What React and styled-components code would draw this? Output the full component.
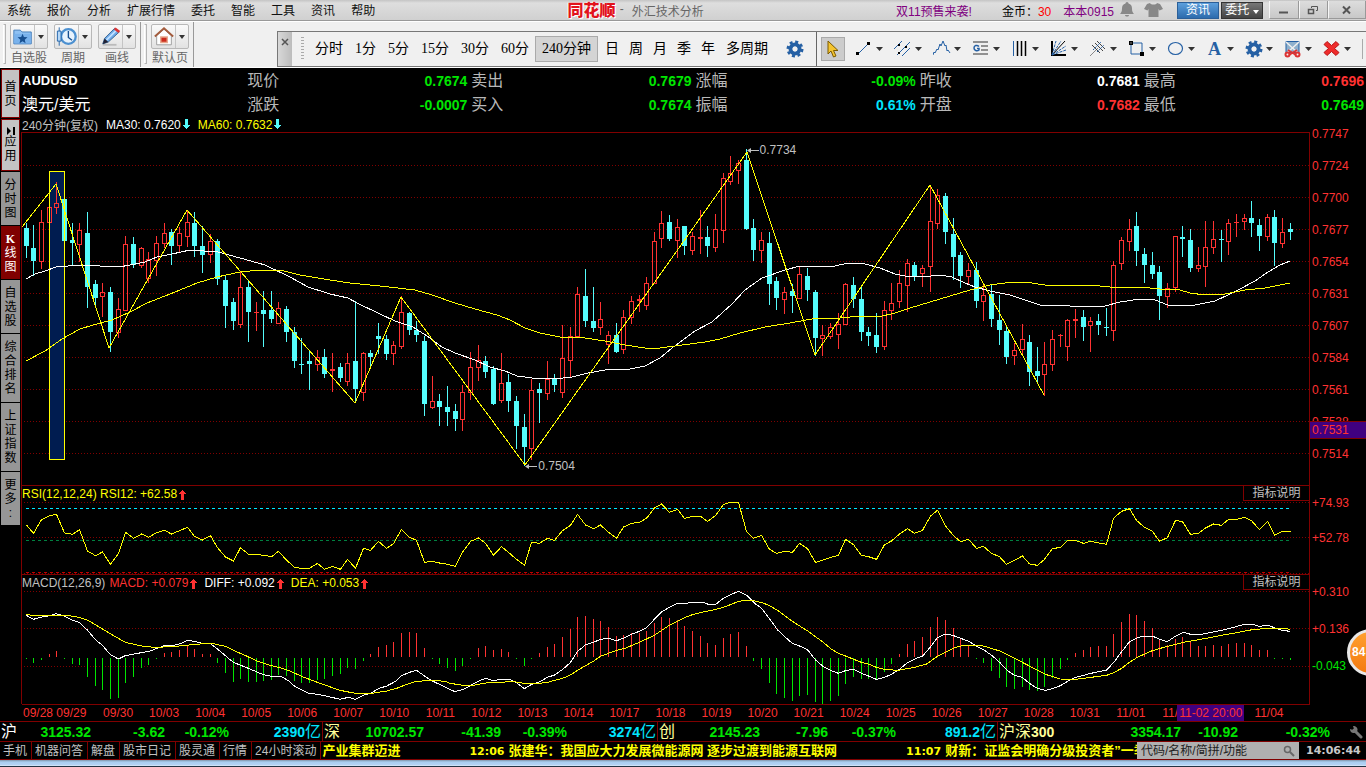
import React from "react";
import styled, { createGlobalStyle, css } from "styled-components";

const GlobalStyle = createGlobalStyle`
  * { box-sizing: border-box; }
  body {
    margin: 0;
    background: #000;
    font-family: "Liberation Sans", "Noto Sans CJK SC", sans-serif;
    font-size: 12px;
  }
  button, input {
    font: inherit;
    color: inherit;
    margin: 0;
    padding: 0;
    border: 0;
    border-radius: 0;
    background: none;
  }
  a { text-decoration: none; }
`;

const red = "#ff3232";
const green = "#00e600";
const cyan = "#00e6ff";
const wine = "#800000";

/* ---------- chart data ---------- */

// type, high, body top, body bottom, low
const CANDLES = `c 223 228 246 258;c 225 248 261 276;r 210 222 261 269;r 207 207 222 222;r 182 203 207 214;c 199 199 241 241;c 223 240 243 265;r 223 230 244 262;c 212 233 287 308;c 280 284 298 306;r 283 292 296 317;c 287 292 332 352;r 298 309 332 338;r 236 244 310 310;c 237 244 265 268;r 247 248 265 268;r 252 259 278 283;r 236 243 260 276;r 223 233 243 248;c 229 232 246 265;r 227 233 245 252;r 211 222 236 247;c 212 223 246 257;c 226 246 255 273;r 234 241 254 263;c 239 241 279 285;c 276 280 306 328;c 298 302 321 330;r 271 287 324 328;c 280 287 312 342;r 302 312 313 331;c 291 310 314 347;c 291 310 319 323;r 302 308 323 324;c 306 309 332 342;c 327 332 361 368;c 338 364 365 374;c 350 361 364 390;r 350 357 364 371;c 349 357 374 378;r 353 369 371 392;c 363 367 378 382;r 353 363 381 386;c 301 361 389 403;r 352 353 392 401;c 350 353 357 367;c 323 336 339 354;c 335 339 354 360;r 341 345 353 365;r 296 312 346 349;c 312 313 330 335;c 321 330 335 342;c 336 341 404 416;r 376 401 407 409;c 394 401 407 426;c 386 407 412 426;c 404 411 419 431;r 385 392 419 431;r 352 367 392 400;r 345 360 367 381;c 356 361 372 378;c 366 369 404 405;r 353 383 400 403;c 374 382 401 412;c 396 401 426 449;c 414 427 447 466;r 379 390 448 460;c 383 389 393 423;r 361 379 393 400;c 374 379 385 392;r 325 358 392 398;r 327 336 360 378;r 287 294 336 337;c 269 296 321 327;c 287 321 328 332;r 302 319 327 335;r 331 335 344 364;c 323 335 352 353;r 310 317 349 354;r 296 301 317 324;r 295 299 301 312;r 277 283 305 310;r 232 241 283 284;r 211 223 238 248;c 215 222 239 241;r 219 227 240 258;c 226 226 246 255;r 232 236 250 255;r 210 237 239 254;c 226 237 246 257;r 214 229 247 252;r 173 178 230 243;r 156 173 181 185;r 160 163 170 184;c 149 160 229 230;c 219 228 250 261;r 232 240 250 263;c 232 243 284 305;c 277 281 298 310;r 287 292 299 314;c 284 291 296 313;r 266 274 298 299;c 268 276 290 301;c 290 292 338 356;r 325 335 338 356;r 323 327 336 339;r 313 324 334 349;r 283 284 324 325;c 277 285 299 308;c 286 299 332 341;c 327 332 336 346;c 313 335 347 353;r 301 310 346 350;r 283 303 310 320;r 270 283 301 308;r 259 263 285 312;c 262 265 276 281;r 265 268 273 287;r 186 221 266 292;r 189 195 223 229;c 193 196 232 244;c 218 234 257 280;c 252 255 276 288;r 263 270 276 284;c 262 270 301 308;r 285 295 301 321;c 284 294 319 327;c 295 320 330 345;c 325 331 357 364;r 343 350 355 365;r 324 339 349 356;c 335 342 372 386;c 347 371 376 382;r 342 364 374 396;r 330 339 364 371;r 334 335 336 347;r 319 320 346 361;r 309 319 321 338;c 310 317 327 341;r 317 321 325 352;c 314 321 325 335;c 308 327 328 336;r 261 265 330 341;r 237 240 263 270;r 219 229 241 251;c 212 226 251 266;c 248 254 265 283;c 252 265 274 279;c 266 272 296 320;r 283 288 296 308;r 236 236 287 292;c 226 237 239 257;c 229 240 268 272;r 247 265 268 272;r 221 247 266 287;r 221 239 247 254;c 230 239 240 262;r 219 223 241 255;r 214 222 223 237;r 214 218 221 230;c 201 218 223 237;c 219 225 236 251;r 214 217 236 241;c 210 217 243 266;r 218 232 243 248;c 223 229 232 240`
  .split(";")
  .map((row) => {
    const [kind, ...v] = row.split(" ");
    const [high, top, bottom, low] = v.map(Number);
    return { up: kind === "r", high, top, bottom, low };
  });

const barX = (i) => Math.floor(26.2 + 7.66 * i);

const ZIGZAG = "22,227 56,184 109,348 187,210 355,403 401,297 525,465 747,152 815,355 930,185 1044,395";
const MA30 =
  "26,279 35,274 45,271 56,267 80,265 100,266 119,267 130,265 145,262 157,257 172,254 190,250 218,252 240,258 265,265 290,277 308,287 330,294 348,298 357,303 380,314 395,321 413,327 430,338 442,347 455,353 475,360 490,367 505,371 517,376 532,378 555,379 572,377 588,373 605,370 630,369 645,366 660,358 672,348 695,331 712,322 732,304 745,290 762,278 785,270 800,266 835,266 848,263 865,264 880,268 895,274 905,276 922,277 940,275 952,277 965,283 975,287 990,291 1010,295 1022,299 1040,305 1070,306 1088,307 1105,306 1120,302 1140,299 1155,300 1168,305 1195,305 1215,301 1230,294 1240,289 1255,281 1268,272 1280,265 1290,261";
const MA60 =
  "26,361 45,351 62,339 80,329 93,325 112,320 130,312 147,303 165,296 180,290 197,283 217,277 240,272 260,270 280,270 300,275 330,280 350,283 380,286 415,290 432,295 455,303 475,309 497,315 510,320 525,328 540,333 560,337 585,338 605,341 625,345 645,348 660,348 675,346 705,342 720,339 740,333 765,327 790,323 812,319 840,318 860,316 878,317 895,313 910,308 930,302 950,296 970,290 990,285 1005,283 1025,282 1045,285 1090,285 1110,287 1140,287 1160,289 1180,290 1190,293 1205,295 1225,294 1245,290 1265,288 1290,283";

// Indicator levels are kept in thirds of a pixel below y = 480
const level = (v) => 480 + v / 3;

const RSI = [
  135, 160, 119, 107, 103, 159, 163, 149, 213, 227, 216, 253, 220, 157, 175, 162, 172, 158, 151, 162, 152, 142, 169, 180,
  167, 203, 231, 243, 203, 223, 223, 226, 230, 214, 240, 262, 265, 265, 250, 268, 259, 268, 238, 265, 205, 211, 184, 205,
  191, 148, 172, 181, 247, 244, 249, 253, 259, 217, 184, 174, 190, 226, 200, 217, 238, 256, 187, 190, 175, 181, 152, 136,
  103, 135, 146, 135, 157, 175, 141, 130, 127, 115, 84, 72, 97, 88, 115, 109, 109, 124, 107, 73, 67, 67, 154, 175, 166,
  208, 220, 214, 217, 190, 206, 247, 241, 232, 226, 178, 194, 226, 230, 238, 194, 183, 162, 146, 160, 151, 108, 91, 138,
  167, 185, 178, 205, 199, 220, 230, 253, 241, 228, 252, 256, 238, 206, 202, 181, 181, 190, 184, 189, 193, 115, 94, 86,
  121, 142, 154, 184, 173, 121, 125, 163, 160, 144, 132, 136, 118, 118, 112, 122, 149, 124, 166, 154, 154,
];

const MACD = [
  537, 549, 540, 522, 513, 537, 552, 555, 591, 618, 630, 657, 654, 609, 591, 564, 555, 537, 519, 516, 510, 498, 507, 522,
  522, 549, 579, 606, 597, 606, 606, 603, 600, 585, 588, 603, 609, 609, 600, 597, 588, 582, 564, 567, 543, 522, 501, 495,
  486, 459, 456, 459, 504, 537, 552, 564, 573, 558, 537, 504, 498, 510, 507, 516, 537, 558, 537, 519, 501, 492, 471, 447,
  411, 408, 417, 423, 441, 468, 465, 459, 459, 453, 429, 411, 414, 420, 438, 453, 468, 489, 495, 474, 462, 456, 498, 543,
  567, 609, 642, 654, 663, 648, 645, 666, 672, 663, 648, 612, 591, 597, 597, 600, 576, 552, 522, 492, 483, 471, 441, 411,
  420, 444, 475, 495, 537, 549, 573, 594, 621, 627, 621, 630, 633, 621, 594, 567, 540, 519, 510, 501, 498, 498, 462, 426,
  402, 405, 423, 444, 480, 495, 477, 471, 486, 498, 498, 495, 498, 492, 489, 489, 495, 510, 510, 537, 537, 540,
];

// Each run is a start column and points in thirds of a pixel
const joinRuns = (runs) =>
  runs
    .map(([start, pts]) =>
      pts
        .split(" ")
        .map((p) => {
          const [x, y] = p.split(",").map(Number);
          return `${start + x / 3},${level(y)}`;
        })
        .join(" ")
    )
    .join(" ");

const DIFF = joinRuns([
  [0, "79,406 100,418 125,411 145,408 169,401 195,409 217,421 238,427 262,450 286,479 307,496 331,524 355,537 376,527 424,518 450,513 490,498 520,496 545,490 562,481 583,484 607,490 631,491 652,507 676,527 700,547 745,565 790,584 814,589 845,590 865,602 883,618 925,639 970,646 1020,658 1045,652 1066,658 1090,646 1115,638 1135,626 1160,618 1185,605 1205,587 1228,577 1250,571 1272,587 1295,602 1320,614 1345,626"],
  [450, "15,635 40,628 61,617 84,604 107,595 130,602 155,598 178,598 200,609 223,626 245,613 268,606 292,592 314,585 338,568 361,548 382,515 406,495 430,487 451,478 475,475 500,482 520,475 544,463 568,454 589,443 613,418 637,394 660,381 682,370 706,370 730,367 760,367 775,373 797,373 820,355 844,343 866,334 889,345 914,370 935,385 960,418 983,450 1004,470 1027,490 1051,499 1073,510 1097,540 1120,560 1142,571 1165,580 1189,571 1211,568 1234,580 1258,589 1279,598 1303,592 1324,583"],
  [900, "0,567 20,550 44,537 68,528 91,501 112,473 136,462 158,466 182,475 206,484 229,498 255,512 275,526 299,547 320,570 343,586 367,592 388,610 412,625 436,631 457,626 481,617 505,603 527,592 573,580 620,570 643,545 665,515 688,486 712,473 734,468 757,468 782,479 802,485 826,469 851,457 872,463 905,463 940,456 987,446 1033,433 1057,433 1078,439 1103,436 1126,444 1147,451 1170,454"],
]);

const DEA = joinRuns([
  [0, "79,403 95,406 200,406 238,412 262,420 286,434 331,461 376,487 430,499 465,502 515,500 550,497 583,493 635,490 676,499 700,511 735,526 769,542 800,553 835,562 865,571 907,590 952,607 1020,631 1066,640 1115,640 1160,633 1190,625 1220,613 1250,604 1295,601 1335,604"],
  [450, "0,610 40,616 75,615 107,609 155,607 185,604 223,610 270,610 292,607 338,595 365,583 382,571 430,544 451,529 500,511 525,505 568,487 613,466 658,436 706,412 730,403 760,396 797,388 820,382 844,373 866,364 889,361 914,363 940,369 960,378 983,391 1027,424 1073,453 1120,487 1142,506 1165,520 1189,529 1234,547 1258,553 1279,562 1303,568 1340,571"],
  [900, "0,570 44,562 80,552 112,529 161,504 182,498 206,495 229,495 255,499 299,513 343,534 367,547 388,558 436,583 481,597 527,598 573,592 620,586 643,577 665,565 688,547 712,532 757,512 802,499 851,487 918,475 964,466 1010,458 1057,449 1103,445 1160,445 1170,450"],
]);

/* ---------- page frame ---------- */

const Page = styled.div`
  position: relative;
  display: flex;
  flex-direction: column;
  min-height: 100vh;
  overflow: hidden;
  background: #000;
`;

/* ---------- title bar ---------- */

const TitleBar = styled.header`
  display: flex;
  justify-content: space-between;
  align-items: center;
  height: 21px;
  background: linear-gradient(#c4c4c4, #dedede 3px, #d0d0d0);
  border-bottom: 1px solid #999;
  white-space: nowrap;
`;

const Menu = styled.nav`
  display: flex;
  gap: 16px;
  padding: 1px 0 0 7px;
  line-height: 20px;
`;

const MenuItem = styled.button`
  color: #111;
`;

const Title = styled.div`
  display: flex;
  align-items: center;
  gap: 4px;
  padding-top: 1px;
  color: #666;
`;

const TitleText = styled.span`
  display: flex;
  gap: 8px;
`;

const Logo = styled.span`
  color: #e2131c;
  font-size: 16px;
  line-height: 18px;
  font-weight: 900;
  text-shadow: 0 0 1px #fff, 1px 1px 0 #fff, -1px 0 0 #fff;
`;

const Account = styled.div`
  display: flex;
  align-items: center;
  height: 20px;
`;

const Promo = styled.a`
  color: #800080;
  margin-right: ${(p) => p.$gap}px;
`;

const Coins = styled.span`
  margin-right: 12px;
  b { color: #f00; font-weight: 400; }
`;

const HeadIcon = styled.svg`
  margin-right: ${(p) => p.$gap}px;
  flex: none;
`;

const HeadButton = styled.button`
  width: 42px;
  height: 17px;
  margin-right: ${(p) => (p.$blue ? 2 : 6)}px;
  border: 1px solid ${(p) => (p.$blue ? "#2b5f98" : "#333")};
  background: ${(p) => (p.$blue ? "linear-gradient(#5c9fdc, #2d6bad)" : "linear-gradient(#777, #444)")};
  color: #fff;
  line-height: 15px;
`;

const WindowButton = styled.button`
  display: flex;
  align-items: center;
  justify-content: center;
  width: ${(p) => p.$w}px;
  height: 18px;
  border: 1px solid #999;
  border-top: 0;
  border-left-color: #f6f6f6;
  background: linear-gradient(#ddd, #c8c8c8);
`;

/* ---------- toolbar ---------- */

const Toolbar = styled.div`
  display: flex;
  height: 47px;
  background: #f0f0f0;
  border-top: 1px solid #fff;
  border-bottom: 1px solid #fff;
`;

const ToolGroup = styled.div`
  display: flex;
  gap: 6px;
  padding: 2px 4px 0 3px;
  border-right: 1px solid #999;
`;

const Grip = styled.span`
  width: 3px;
  height: 40px;
  margin-right: -2px;
  border: 1px solid #b4b4b4;
  border-left-color: #fff;
`;

const ToolButton = styled.button`
  display: flex;
  flex-direction: column;
  align-items: center;
  width: 38px;
  color: #666;
  line-height: 18px;
`;

const ToolFace = styled.span`
  display: grid;
  grid-template-columns: 24px 12px;
  place-items: center;
  width: 38px;
  height: 25px;
  border: 1px solid #b8b8b8;
  border-radius: 2px;
  background: linear-gradient(90deg, transparent 23px, #c4c4c4 23px, #c4c4c4 24px, transparent 24px),
    linear-gradient(#fafafa, #e2e2e2);
`;

const Caret = styled.span`
  width: 0;
  height: 0;
  border: 3px solid transparent;
  border-top: 4px solid #333;
  border-bottom: 0;
`;

const FloatBar = styled.div`
  display: flex;
  flex: 1;
  min-width: 0;
  height: 36px;
  margin: 9px 0 0 83px;
  border: 1px solid #777;
  border-right: 0;
`;

const CloseBar = styled.button`
  flex: none;
  width: 14px;
  background: linear-gradient(90deg, #d8d8d8, #bcbcbc);
  display: flex;
  justify-content: center;
  padding-top: 6px;
`;

const Periods = styled.div`
  display: flex;
  align-items: center;
  flex: none;
  width: 525px;
  padding-left: 9px;
  border-right: 1px solid #666;
`;

const DotGrip = styled.span`
  width: 3px;
  height: 24px;
  margin-right: 5px;
  background: repeating-linear-gradient(#aaa 0 1px, transparent 1px 3px);
`;

const Period = styled.button`
  padding: 0 ${(p) => (p.$tight ? 5 : 6)}px;
  height: 26px;
  font: 14px/22px "Liberation Serif", "Noto Sans CJK SC", serif;
  color: #000;
  white-space: nowrap;
  ${(p) =>
    p.$active &&
    css`
      border: 1px solid #aaa;
      background: #d4d4d4;
      margin-right: 2px;
    `}
`;

const GearButton = styled.button`
  display: flex;
  margin-left: 12px;
`;

const Drawing = styled.div`
  display: flex;
  flex: 1;
  min-width: 0;
  align-items: center;
  padding-left: 4px;
`;

const Pointer = styled.button`
  display: grid;
  place-items: center;
  flex: none;
  width: 24px;
  height: 24px;
  margin-right: 10px;
  border: 1px solid #aaa;
  background: #ccc;
`;

const DrawTool = styled.button`
  display: flex;
  align-items: center;
  flex: 0 0 39px;
`;

const ToolEnd = styled.span`
  flex: none;
  width: 1px;
  height: 20px;
  background: #aaa;
`;

/* ---------- body ---------- */

const Body = styled.div`
  display: flex;
  padding-top: 1px;
`;

const SideBar = styled.nav`
  display: flex;
  flex-direction: column;
  gap: 1px;
  flex: 0 0 21px;
  padding: 0 1px 0 1px;
`;

const SideTab = styled.button`
  display: flex;
  flex-direction: column;
  align-items: center;
  justify-content: center;
  width: 19px;
  height: ${(p) => p.$h}px;
  line-height: 14px;
  color: ${(p) => (p.$active ? "#fff" : "#000")};
  background: ${(p) => (p.$active ? wine : p.$light ? "#c4c4c4" : "#969696")};
  border: ${(p) => (p.$light ? `1px solid ${wine}` : "0")};
  b { font-family: "Liberation Serif", serif; }
`;

const Main = styled.main`
  flex: 1;
  min-width: 0;
`;

const Quotes = styled.dl`
  display: grid;
  grid-template-columns: repeat(6, 1fr);
  grid-auto-rows: 24px;
  margin: 0;
  line-height: 24px;
`;

const Name = styled.div`
  color: #fff;
  padding-left: 1px;
  font-size: ${(p) => (p.$code ? 13 : 16)}px;
  font-weight: ${(p) => (p.$code ? 700 : 400)};
`;

const Quote = styled.div`
  display: flex;
  justify-content: space-between;
  padding: 0 2px;
  dt { font-size: 16px; color: #b8b8b8; }
  dd { margin: 0; font-size: 14px; font-weight: 700; color: ${(p) => p.$color}; }
`;

const ChartArea = styled.section`
  display: grid;
  grid-template-columns: 1fr 56px;
`;

const Info = styled.div`
  display: flex;
  align-items: center;
  height: ${(p) => p.$h}px;
  padding-left: ${(p) => (p.$inset ? 0 : 1)}px;
  color: #c0c0c0;
  white-space: nowrap;
`;

const Stat = styled.span`
  display: flex;
  align-items: center;
  gap: 2px;
  margin-left: ${(p) => p.$gap}px;
  color: ${(p) => p.$color};
`;

const Plots = styled.div`
  min-width: 0;
`;

const Panel = styled.div`
  position: relative;
  border: 1px solid ${wine};
  border-bottom: 0;
`;

const Plot = styled.svg`
  display: block;
  width: 100%;
  height: ${(p) => p.$h}px;
`;

const Explain = styled.button`
  align-self: flex-start;
  margin-left: auto;
  width: 66px;
  height: 15px;
  line-height: 14px;
  color: #c0c0c0;
  border-left: 1px solid ${wine};
  border-bottom: 1px solid ${wine};
`;

const Extreme = styled.span`
  position: absolute;
  left: ${(p) => p.$left}%;
  top: ${(p) => p.$top}px;
  display: flex;
  align-items: center;
  gap: 1px;
  line-height: 14px;
  color: #c0c0c0;
`;

const Dates = styled.div`
  position: relative;
  display: grid;
  grid-template-columns: 73fr repeat(26, 46fr) 18fr;
  height: 17px;
  border-top: 1px solid ${wine};
  margin-left: 1px;
  line-height: 17px;
  color: ${red};
  text-align: center;
  white-space: nowrap;
`;

const DateCell = styled.span`
  min-width: 0;
  &:first-child { text-align: left; padding-left: 1px; }
`;

const DateMark = styled.span`
  position: absolute;
  left: 89.7%;
  top: 0;
  width: 67px;
  height: 16px;
  background: #400080;
`;

const Axis = styled.div`
  position: relative;
  height: ${(p) => p.$h}px;
  padding: ${(p) => p.$pad}px 0 0 2px;
  line-height: ${(p) => p.$step}px;
  color: ${red};
  overflow: hidden;
`;

const AxisLabel = styled.div`
  color: ${(p) => (p.$fall ? green : "inherit")};
`;

const PriceMark = styled.div`
  position: absolute;
  left: 0;
  right: 0;
  top: 304px;
  height: 18px;
  padding-left: 2px;
  line-height: 17px;
  background: #400080;
  border: solid ${wine};
  border-width: 1px 0;
`;

/* ---------- footer ---------- */

const IndexBar = styled.div`
  display: grid;
  grid-template-columns: 323fr 335fr 340fr 368fr;
  height: 20px;
  border-top: 1px solid ${wine};
  line-height: 20px;
  white-space: nowrap;
`;

const IndexGroup = styled.div`
  display: grid;
  grid-template-columns: ${(p) => p.$cols};
  height: 19px;
  padding-left: 1px;
  border-right: ${(p) => (p.$last ? "0" : `1px solid ${wine}`)};
  font-size: 14px;
  font-weight: 700;
  text-align: right;
  color: ${green};
`;

const IndexName = styled.span`
  display: flex;
  justify-content: space-between;
  a { color: ${(p) => p.$color}; font-size: 16px; font-weight: 400; }
  a b { font-size: 14px; }
`;

const Amount = styled.span`
  color: ${cyan};
  padding-right: 1px;
  span { font-size: 16px; font-weight: 400; }
`;

const WrenchButton = styled.button`
  display: grid;
  place-items: center end;
  padding-right: 3px;
`;

const TickerBar = styled.div`
  display: flex;
  height: 18px;
  border-top: 1px solid ${wine};
  line-height: 18px;
  white-space: nowrap;
`;

const TickerTab = styled.button`
  height: 17px;
  padding: 0 4px 0 3px;
  border-right: 1px solid ${wine};
  color: #c0c0c0;
`;

const News = styled.div`
  display: flex;
  flex: 1;
  min-width: 0;
  gap: 69px;
  overflow: hidden;
  padding-left: 1px;
`;

const NewsItem = styled.a`
  flex: none;
  color: #ff0;
  font-size: 13px;
  font-weight: 700;
  time { font: 700 11px "DejaVu Sans", sans-serif; margin-right: 4px; }
`;

const Search = styled.label`
  display: flex;
  align-items: center;
  width: 162px;
  padding: 0 4px;
  background: #b0b0b0;
  input {
    flex: 1;
    min-width: 0;
    outline: 0;
  }
  input::placeholder { color: #222; opacity: 1; }
`;

const Clock = styled.time`
  width: 67px;
  padding-left: 7px;
  font: 700 11px/17px "DejaVu Sans", sans-serif;
  color: #c8c8c8;
`;

const Desktop = styled.div`
  flex: 1;
  min-height: 8px;
  border-top: 1px solid ${wine};
  border-bottom: 1px solid #234;
  background: linear-gradient(#7f93a8, #a9cdf0 2px, #b4d2f4 5px, #e8f2fc);
`;

const Badge = styled.button`
  position: absolute;
  right: -28px;
  top: 629px;
  width: 47px;
  height: 47px;
  border: 3px solid #e8e8e8;
  border-radius: 50%;
  background: linear-gradient(#ffa030, #f47a10);
  color: #fff;
  font: 700 12px/41px "Liberation Sans", sans-serif;
  text-align: left;
  padding-left: 2px;
`;

/* ---------- drawings ---------- */

const Arrow = ({ down }) => (
  <svg width="7" height="11" viewBox="0 0 7 11" fill={down ? "#54fcfc" : red} shapeRendering="crispEdges" aria-hidden="true">
    <path d={down ? "M2 0h3v6h2L4 10H3L0 6h2z" : "M2 11h3V5h2L4 1H3L0 5h2z"} />
  </svg>
);

const Gear = () => (
  <svg width="18" height="18" viewBox="0 0 18 18" fill="none" stroke="#2560a4">
    <circle cx="9" cy="9" r="4.5" strokeWidth="4" />
    <circle cx="9" cy="9" r="7.2" strokeWidth="2.6" strokeDasharray="3 2.65" />
    <circle cx="9" cy="9" r="2.4" stroke="none" fill="#f0f0f0" />
  </svg>
);

const LeftArrow = () => (
  <svg width="12" height="7" viewBox="0 0 12 7" aria-hidden="true">
    <path d="M0 3.5 4 1v5z" fill="#c0c0c0" />
    <path d="M2 3.5h10" stroke="#c0c0c0" />
  </svg>
);

const blue = "#2560a4";
const DRAW_TOOLS = [
  ["线段", <g><path d="M3 14 14 3" stroke={blue} /><path d="M1 12h3v3H1zM12 2h3v3h-3z" fill="#000" stroke="none" /></g>],
  ["平行线", <g stroke={blue}><path d="M0 9 8 1M3 15 16 2M8 16l8-8" /><path d="M4 4h2v2H4zM11 6h2v2h-2zM4 12h2v2H4z" fill="#000" stroke="none" /></g>],
  ["波浪", <path d="M0 15l1-3 1 1 2-4 1 1 2-6 1 2 2-5 2 5 1-1 1 6 1-1 2 3" stroke={blue} />],
  ["黄金分割", <g stroke="#333"><path d="M1 2h15M9 6h7M9 10h7M1 14h15" /><path d="M7 6.500C5 4.500 2 5.500 2 8s3 3.500 5 2V8.500H5" stroke={blue} strokeWidth="1.500" /></g>],
  ["周期线", <g><path d="M2.500 1v15" stroke={blue} /><path d="M6.500 1v15M10.500 1v15M14.500 1v15" stroke="#000" strokeWidth="1.500" /></g>],
  ["扇形线", <g stroke={blue}><path d="M2 1v14h14" stroke="#000" strokeWidth="2" /><path d="M2 15 15 1" stroke="#000" /><path d="M2 15 6 1M2 15 11 1M2 15 16 6M2 15 16 10" strokeDasharray="3 1" /></g>],
  ["回归线", <g stroke="#444"><path d="M1 16 9 8" stroke="#888" /><path d="M3 5l8 8M6 3l8 8M8 1l8 8" /><path d="M4 10 12 2M8 12l7-7" stroke={blue} strokeDasharray="2 1" /></g>],
  ["矩形", <g><path d="M3 3h11v11H3z" stroke={blue} /><path d="M1 1h4v4H1zM12 12h4v4h-4z" fill="#000" stroke="none" /><path d="M2.500 2.500h1v1h-1z" fill="#fff" stroke="none" /></g>],
  ["圆", <ellipse cx="8.500" cy="8.500" rx="7" ry="6" stroke={blue} strokeWidth="1.200" />],
  ["文字", <g fill={blue} stroke="none" fontFamily="Liberation Serif, serif" fontWeight="700" fontSize="18"><text x="2" y="15">A</text></g>],
  ["设置", null],
  ["截图", <g><path d="M2 1.500h13v11H2z" fill="#8fb0cc" stroke={blue} /><path d="M2 2l12 11M15 2 4 12" stroke="#eee" strokeWidth="1.500" /><path d="M4 10l8 5M13 10l-8 5" stroke="#d33" strokeWidth="2" /><circle cx="3.500" cy="14.500" r="2" stroke="#d33" strokeWidth="2" /><circle cx="13.500" cy="14.500" r="2" stroke="#d33" strokeWidth="2" /></g>],
  ["删除", <path d="M4 1.500l4.500 4 4.500-4 3 3-4.500 4 4.500 4-3 3-4.500-4-4.500 4-3-3 4.500-4-4.500-4z" fill="#ef2b2b" stroke="#b81414" />],
];

const FACES = {
  自选股: <g><path d="M2 4h7l2 2h10v13H2z" fill="#8fc1f3" stroke="#3c78b8" /><path d="M2.500 8h18v10.500h-18z" fill="#79b2ec" /><path d="M11.500 8l1.500 3.600 3.900.3-3 2.500.9 3.800-3.300-2-3.300 2 .9-3.800-3-2.500 3.900-.3z" fill="#174f90" /></g>,
  周期: <g><circle cx="13.500" cy="11" r="8" fill="#e8f3fd" stroke="#4c90d0" strokeWidth="2.500" /><path d="M13.500 5v7l4 3" fill="none" stroke="#174f90" strokeWidth="1.500" /><path d="M3.500 1v20" stroke="#1c60a8" /><path d="M1.500 5h4v11h-4z" fill="#b7d8f7" stroke="#1c60a8" /></g>,
  画线: <g><path d="M3 20h15" stroke="#bbb" strokeWidth="2" /><path d="M3 19l2-6L16 2l5 4L9 17z" fill="#6ca8e8" stroke="#35618f" /><path d="M7 15 18 4" stroke="#bfe0ff" strokeWidth="2" /><path d="M3 19l2-6 4 4z" fill="#223" /><path d="M15 3l2-2 5 4-2 2z" fill="#d33" /></g>,
  默认页: <g><path d="M4 10v10h16V10l-8-7z" fill="#fff" stroke="#999" /><path d="M2 11 12 2l10 9" fill="none" stroke="#a35b3c" strokeWidth="2" /><path d="M8.500 11.500h7v6h-7z" fill="#cc2b1d" stroke="#e7a68a" strokeWidth="1.500" /></g>,
};

const GridLine = ({ y }) => <path d={`M24 ${y + 0.5}H1309`} stroke={wine} strokeDasharray="1 2" />;

function PriceChart() {
  return (
    <Plot $h={352} viewBox="22 133 1287 352" preserveAspectRatio="none" shapeRendering="crispEdges" fill="none">
      {[165, 197, 229, 261, 293, 325, 357, 389, 421, 453].map((y) => (
        <GridLine key={y} y={y} />
      ))}
      <rect x="49.5" y="171.5" width="15" height="288" fill="#001c50" />
      {CANDLES.map((c, i) => {
        const x = barX(i);
        const h = c.bottom - c.top;
        if (!c.up) {
          return (
            <g key={i} fill="#54fcfc">
              <rect x={x} y={c.high} width="1" height={c.low - c.high} />
              <rect x={x - 2} y={c.top} width="5" height={Math.max(1, h)} />
            </g>
          );
        }
        return (
          <g key={i}>
            <rect x={x} y={c.high} width="1" height={c.top - c.high} fill={red} />
            <rect x={x} y={c.bottom} width="1" height={Math.max(0, c.low - c.bottom)} fill={red} />
            {h < 3 ? (
              <rect x={x - 2} y={c.top} width="5" height={h} fill={red} />
            ) : (
              <rect x={x - 1.5} y={c.top + 0.5} width="4" height={h} stroke={red} />
            )}
          </g>
        );
      })}
      <rect x="49.5" y="171.5" width="15" height="288" stroke="#ff0" />
      <polyline points={MA30} stroke="#fff" />
      <polyline points={MA60} stroke="#ff0" />
      <polyline points={ZIGZAG} stroke="#ff0" />
    </Plot>
  );
}

function RsiChart() {
  return (
    <Plot $h={72} viewBox="22 502 1287 72" preserveAspectRatio="none" shapeRendering="crispEdges" fill="none">
      <GridLine y={502} />
      <GridLine y={537} />
      <GridLine y={573} />
      <path d="M26 508.5H1290" stroke={cyan} strokeDasharray="3 3" />
      <path d="M26 540.5H1290" stroke="#008040" strokeDasharray="3 3" />
      <path d="M26 572.5H1290" stroke="#c00000" strokeDasharray="3 3" />
      <polyline points={RSI.map((v, i) => `${barX(i) + 0.5},${level(v)}`).join(" ")} stroke="#ff0" />
    </Plot>
  );
}

function MacdChart() {
  return (
    <Plot $h={113} viewBox="22 591 1287 113" preserveAspectRatio="none" shapeRendering="crispEdges" fill="none">
      <GridLine y={591} />
      <GridLine y={628} />
      <GridLine y={666} />
      {MACD.map((v, i) => (
        <path
          key={i}
          d={`M${barX(i) + 0.5} ${v < 531 ? 657 : 658}V${level(v)}`}
          stroke={v < 531 ? red : green}
        />
      ))}
      <polyline points={DIFF} stroke="#fff" />
      <polyline points={DEA} stroke="#ff0" />
    </Plot>
  );
}

/* ---------- content ---------- */

const MENU = ["系统", "报价", "分析", "扩展行情", "委托", "智能", "工具", "资讯", "帮助"];
const PERIODS = ["分时", "1分", "5分", "15分", "30分", "60分", "240分钟", "日", "周", "月", "季", "年", "多周期"];
const PRICES = ["0.7747", "0.7724", "0.7700", "0.7677", "0.7654", "0.7631", "0.7607", "0.7584", "0.7561", "0.7538", "0.7514"];
const DATES = [
  "09/28 09/29", "09/30", "10/03", "10/04", "10/05", "10/06", "10/07", "10/10", "10/11", "10/12", "10/13", "10/14",
  "10/17", "10/18", "10/19", "10/20", "10/21", "10/24", "10/25", "10/26", "10/27", "10/28", "10/31", "11/01", "11/02",
  "", "11/04",
];
const QUOTES = [
  [["现价", "0.7674", green], ["卖出", "0.7679", green], ["涨幅", "-0.09%", green], ["昨收", "0.7681", "#fff"], ["最高", "0.7696", red]],
  [["涨跌", "-0.0007", green], ["买入", "0.7674", green], ["振幅", "0.61%", cyan], ["开盘", "0.7682", red], ["最低", "0.7649", green]],
];
const SIDE = [
  ["首页", 49, "light"], ["应用", 52, "light"], ["分时图", 53], ["K线图", 53, "active"], ["自选股", 53],
  ["综合排名", 68], ["上证指数", 68], ["更多", 53],
];
const INDEXES = [
  { name: "沪", color: "#fff", cols: "90fr 74fr 64fr 93fr", values: ["3125.32", "-3.62", "-0.12%"], amount: "2390" },
  { name: "深", color: "#ff9", cols: "100fr 77fr 66fr 90fr", values: ["10702.57", "-41.39", "-0.39%"], amount: "3274" },
  { name: "创", color: "#ff9", cols: "101fr 68fr 68fr 101fr", values: ["2145.23", "-7.96", "-0.37%"], amount: "891.2" },
  { name: "沪深", color: "#ff9", cols: "182fr 57fr 92fr 36fr", values: ["3354.17", "-10.92", "-0.32%"] },
];
const TABS = ["手机", "机器问答", "解盘", "股市日记", "股灵通", "行情", "24小时滚动"];

export default function App() {
  return (
    <Page>
      <GlobalStyle />
      <TitleBar>
        <Menu>
          {MENU.map((m) => (
            <MenuItem key={m}>{m}</MenuItem>
          ))}
        </Menu>
        <Title>
          <Logo>同花顺</Logo>
          <TitleText><span>-</span><span>外汇技术分析</span></TitleText>
        </Title>
        <Account>
          <Promo href="#promo" $gap={30}>双11预售来袭!</Promo>
          <Coins>金币：<b>30</b></Coins>
          <Promo href="#user" $gap={6}>本本0915</Promo>
          <HeadIcon width="14" height="16" viewBox="0 0 14 16" fill="#888" $gap={10}>
            <path d="M7 0c1 0 1.500.8 1.500 1.500C11 2 12 4 12 6.500c0 3 .7 4 2 5.500H0c1.300-1.500 2-2.500 2-5.500C2 4 3 2 5.500 1.500 5.500.8 6 0 7 0zM5 13h4c0 2-4 2-4 0z" />
          </HeadIcon>
          <HeadIcon width="19" height="14" viewBox="0 0 19 14" fill="#888" $gap={14}>
            <path d="M6 0c1 2 6 2 7 0l3 1 3 5-3.500 1.500L14.500 6v8h-10V6l-1 1.500L0 6l3-5z" />
          </HeadIcon>
          <HeadButton $blue>资讯</HeadButton>
          <HeadButton>委托 <svg width="6" height="4" viewBox="0 0 6 4"><path d="M0 0h6L3 4z" fill="#fff" /></svg></HeadButton>
          <WindowButton $w={30} aria-label="最小化">
            <svg width="10" height="10"><path d="M0 7.500h9" stroke="#555" strokeWidth="2" /></svg>
          </WindowButton>
          <WindowButton $w={29} aria-label="还原">
            <svg width="12" height="10" fill="none" stroke="#555"><path d="M4.500 3V1.500h6v4H9" /><path d="M1.500 4.500h5v4h-5z" strokeWidth="1.500" /></svg>
          </WindowButton>
          <WindowButton $w={38} aria-label="关闭">
            <svg width="10" height="10"><path d="M1 1.500l7 7M8 1.500l-7 7" stroke="#555" strokeWidth="2" /></svg>
          </WindowButton>
        </Account>
      </TitleBar>

      <Toolbar>
        <ToolGroup>
          <Grip />
          {["自选股", "周期", "画线"].map((t) => (
            <ToolButton key={t}>
              <ToolFace><svg width="22" height="22" viewBox="0 0 24 23">{FACES[t]}</svg><Caret /></ToolFace>
              {t}
            </ToolButton>
          ))}
        </ToolGroup>
        <ToolGroup>
          <Grip />
          <ToolButton>
            <ToolFace><svg width="22" height="22" viewBox="0 0 24 23">{FACES["默认页"]}</svg><Caret /></ToolFace>
            默认页
          </ToolButton>
        </ToolGroup>
        <FloatBar>
          <CloseBar aria-label="关闭工具条">
            <svg width="9" height="9"><path d="M1 1l6 6M7 1l-6 6" stroke="#555" strokeWidth="1.500" /></svg>
          </CloseBar>
          <Periods>
            <DotGrip />
            {PERIODS.map((p) => (
              <Period key={p} $active={p === "240分钟"} $tight={p.length === 1}>{p}</Period>
            ))}
            <GearButton aria-label="周期设置"><Gear /></GearButton>
          </Periods>
          <Drawing>
            <Pointer aria-label="选择">
              <svg width="14" height="18" viewBox="0 0 14 18"><path d="M2 1v13l3-3 2.500 6 2.500-1-2.500-5.500H12z" fill="#f4c430" stroke="#7a5a00" /></svg>
            </Pointer>
            {DRAW_TOOLS.map(([label, art]) => (
              <DrawTool key={label} aria-label={label}>
                {art ? <svg width="18" height="18" viewBox="0 0 18 18" fill="none">{art}</svg> : <Gear />}
                <svg width="12" height="4" viewBox="0 0 12 4"><path d="M3 0h7L6.500 4z" fill="#333" /></svg>
              </DrawTool>
            ))}
            <ToolEnd />
          </Drawing>
        </FloatBar>
      </Toolbar>

      <Body>
        <SideBar>
          {SIDE.map(([label, h, state]) => (
            <SideTab key={label} $h={h} $light={state === "light"} $active={state === "active"}>
              {label === "应用" && <svg width="8" height="8"><path d="M0 0l4 4-4 4zM6 0h2v8H6z" /></svg>}
              {[...label].map((ch) => (ch === "K" ? <b key={ch}>{ch}</b> : <span key={ch}>{ch}</span>))}
              {label === "更多" && <span>:</span>}
            </SideTab>
          ))}
        </SideBar>

        <Main>
          <Quotes>
            {QUOTES.map((row, r) => (
              <React.Fragment key={r}>
                <Name $code={r === 0}>{r === 0 ? "AUDUSD" : "澳元/美元"}</Name>
                {row.map(([k, v, color]) => (
                  <Quote key={k} $color={color}>
                    <dt>{k}</dt>
                    <dd>{v}</dd>
                  </Quote>
                ))}
              </React.Fragment>
            ))}
          </Quotes>

          <ChartArea>
            <Plots>
              <Info $h={15}>
                240分钟(复权)
                <Stat $color="#fff" $gap={8}>MA30: 0.7620<Arrow down /></Stat>
                <Stat $color="#ff0" $gap={8}>MA60: 0.7632<Arrow down /></Stat>
              </Info>
              <Panel>
                <PriceChart />
                <Extreme $left={56.3} $top={10}><LeftArrow />0.7734</Extreme>
                <Extreme $left={39.1} $top={326}><LeftArrow />0.7504</Extreme>
              </Panel>
              <Panel>
                <Info $h={16} $inset>
                  <Stat $color="#ff0" $gap={0}>RSI(12,12,24) RSI12: +62.58<Arrow /></Stat>
                  <Explain>指标说明</Explain>
                </Info>
                <RsiChart />
              </Panel>
              <Panel>
                <Info $h={16} $inset>
                  MACD(12,26,9)
                  <Stat $color={red} $gap={4}>MACD: +0.079<Arrow /></Stat>
                  <Stat $color="#fff" $gap={7}>DIFF: +0.092<Arrow /></Stat>
                  <Stat $color="#ff0" $gap={7}>DEA: +0.053<Arrow /></Stat>
                  <Explain>指标说明</Explain>
                </Info>
                <MacdChart />
              </Panel>
              <Dates>
                {DATES.map((d) => (
                  <DateCell key={d}>{d}</DateCell>
                ))}
                <DateMark>11-02 20:00</DateMark>
              </Dates>
            </Plots>

            <div>
              <Axis $h={368} $step={32} $pad={1}>
                {PRICES.map((p) => <AxisLabel key={p}>{p}</AxisLabel>)}
                <PriceMark>0.7531</PriceMark>
              </Axis>
              <Axis $h={89} $step={35} $pad={1}>
                <AxisLabel>+74.93</AxisLabel>
                <AxisLabel>+52.78</AxisLabel>
              </Axis>
              <Axis $h={130} $step={37} $pad={0}>
                <AxisLabel>+0.310</AxisLabel>
                <AxisLabel>+0.136</AxisLabel>
                <AxisLabel $fall>-0.043</AxisLabel>
              </Axis>
            </div>
          </ChartArea>
        </Main>
      </Body>

      <IndexBar>
        {INDEXES.map((g) => (
          <IndexGroup key={g.name} $cols={g.cols} $last={!g.amount}>
            <IndexName $color={g.color}>
              <a href="#index">{g.name}{!g.amount && <b>300</b>}</a>
              {g.values[0]}
            </IndexName>
            <span>{g.values[1]}</span>
            <span>{g.values[2]}</span>
            {g.amount ? (
              <Amount>{g.amount}<span>亿</span></Amount>
            ) : (
              <WrenchButton aria-label="设置">
                <svg width="13" height="13" viewBox="0 0 13 13"><path d="M4 4l7 7" stroke="#777" strokeWidth="3" strokeLinecap="round" /><path d="M3 0l1 3-1 1-3-1c0 3 2 4.500 4.500 4L7.500 4.500C8 2 6 0 3 0z" fill="#777" /></svg>
              </WrenchButton>
            )}
          </IndexGroup>
        ))}
      </IndexBar>

      <TickerBar>
        {TABS.map((t) => (
          <TickerTab key={t}>{t}</TickerTab>
        ))}
        <News>
          <NewsItem href="#n1">产业集群迈进</NewsItem>
          <NewsItem href="#n2"><time>12:06</time>张建华：我国应大力发展微能源网 逐步过渡到能源互联网</NewsItem>
          <NewsItem href="#n3"><time>11:07</time>财新：证监会明确分级投资者”一季</NewsItem>
        </News>
        <Search>
          <input aria-label="搜索" placeholder="代码/名称/简拼/功能" />
          <svg width="12" height="12" viewBox="0 0 12 12" fill="none" stroke="#666"><circle cx="4.500" cy="4.500" r="3" strokeWidth="1.500" /><path d="M7 7l4 4" strokeWidth="2" /></svg>
        </Search>
        <Clock>14:06:44</Clock>
      </TickerBar>
      <Desktop />
      <Badge>84</Badge>
    </Page>
  );
}
